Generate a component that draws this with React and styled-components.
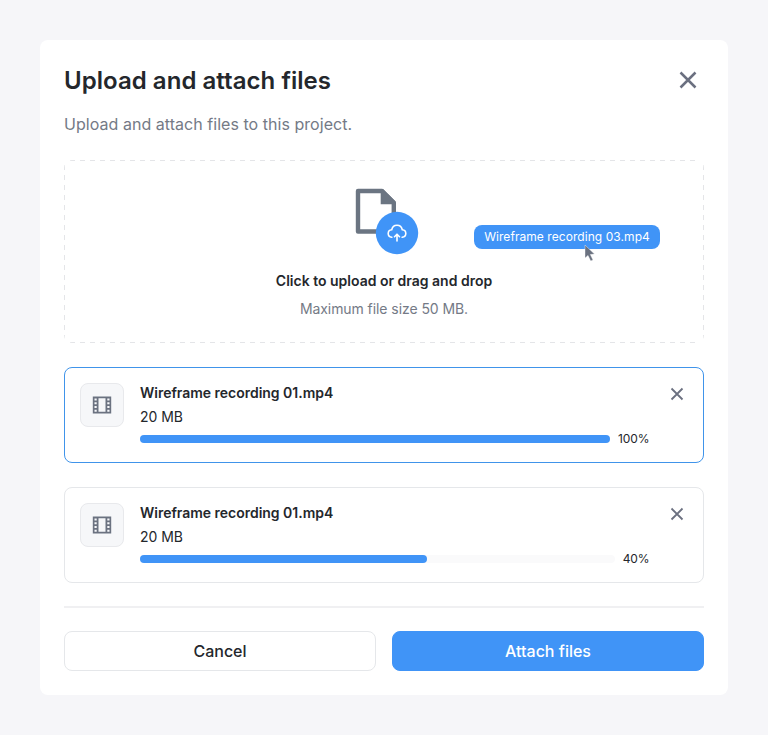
import React from "react";
import styled, { createGlobalStyle } from "styled-components";

const GlobalStyle = createGlobalStyle`
  * { box-sizing: border-box; }
  body {
    margin: 0;
    background: #f6f6f9;
    font-family: Inter, "Liberation Sans", sans-serif;
    color: #24272c;
  }
  h1, p { margin: 0; }
  button { font: inherit; color: inherit; cursor: pointer; }
`;

const Page = styled.main`
  padding: 40px;
  height: 735px;
`;

const Dialog = styled.section`
  display: flex;
  flex-direction: column;
  width: 688px;
  height: 655px;
  padding: 24px;
  border-radius: 8px;
  background: #fff;
`;

const Header = styled.header`
  display: flex;
  justify-content: space-between;
  align-items: center;
  height: 32px;
`;

const Title = styled.h1`
  padding-top: 2px;
  font-size: 24px;
  font-weight: 600;
  line-height: 32px;
  letter-spacing: 0.04px;
`;

const Subtitle = styled.p`
  margin-top: 16px;
  font-size: 16px;
  line-height: 24px;
  letter-spacing: 0.04px;
  color: #747a86;
`;

const IconButton = styled.button`
  display: flex;
  align-items: center;
  justify-content: center;
  flex: none;
  width: ${(p) => p.$size}px;
  height: ${(p) => p.$size}px;
  padding: 0;
  border: 0;
  background: none;
  color: #6b7080;
`;

const DropZone = styled.div`
  position: relative;
  display: flex;
  flex-direction: column;
  align-items: center;
  height: 183px;
  margin-top: 24px;
  padding-top: 28px;
  border-radius: 8px;
  --dash-x: repeating-linear-gradient(90deg, #e4e5e8 0 5px, transparent 5px 10px);
  --dash-y: repeating-linear-gradient(180deg, #e4e5e8 0 5px, transparent 5px 10px);
  background:
    var(--dash-x) 6px 0 / calc(100% - 8px) 1px no-repeat,
    var(--dash-x) 6px 100% / calc(100% - 8px) 1px no-repeat,
    var(--dash-y) 0 5px / 1px calc(100% - 8px) no-repeat,
    var(--dash-y) 100% 5px / 1px calc(100% - 8px) no-repeat;
`;

const UploadArt = styled.svg`
  display: block;
  width: 66px;
  height: 68px;
  margin-left: 8px;
`;

const DropTitle = styled.p`
  margin-top: 15px;
  font-size: 14px;
  font-weight: 600;
  line-height: 20px;
`;

const DropHint = styled.p`
  margin-top: 8px;
  font-size: 14px;
  line-height: 20px;
  letter-spacing: -0.07px;
  color: #747a86;
`;

const DragChip = styled.div`
  position: absolute;
  left: 410px;
  top: 65px;
  width: 186px;
  height: 24px;
  border-radius: 8px;
  background: #4094f7;
  color: #fff;
  font-size: 12px;
  line-height: 24px;
  letter-spacing: 0.06px;
  text-align: center;
  white-space: nowrap;
`;

const Cursor = styled.svg`
  position: absolute;
  left: 110px;
  top: 19px;
  width: 12px;
  height: 19px;
`;

const FileCard = styled.article`
  display: flex;
  height: 96px;
  margin-top: 24px;
  padding: 15px;
  border: 1px solid ${(p) => (p.$active ? "#4094ea" : "#e5e7ea")};
  border-radius: 8px;
`;

const FileBadge = styled.div`
  display: flex;
  align-items: center;
  justify-content: center;
  flex: none;
  width: 44px;
  height: 44px;
  border: 1px solid #e8e9ec;
  border-radius: 8px;
  background: #f6f7f9;
`;

const FileInfo = styled.div`
  width: 509px;
  margin-left: 16px;
`;

const FileName = styled.p`
  font-size: 14px;
  font-weight: 600;
  line-height: 20px;
  letter-spacing: -0.02px;
`;

const FileSize = styled.p`
  margin-top: 4px;
  font-size: 14px;
  line-height: 20px;
  letter-spacing: -0.05px;
`;

const ProgressRow = styled.div`
  display: flex;
  align-items: center;
  gap: 8px;
  height: 16px;
  margin-top: 4px;
`;

const Track = styled.div`
  flex: 1;
  height: 8px;
  border-radius: 4px;
  background: #fafafb;
`;

const Fill = styled.div`
  height: 100%;
  border-radius: 4px;
  background: #4094f7;
`;

const Percent = styled.span`
  margin-right: -0.5px;
  font-size: 12px;
  line-height: 16px;
  letter-spacing: -0.1px;
`;

const CardAction = styled.div`
  margin: 0 0 0 auto;
`;

const Footer = styled.footer`
  display: grid;
  grid-template-columns: 1fr 1fr;
  gap: 16px;
  margin-top: 23px;
  padding-top: 23px;
  border-top: 2px solid #f0f0f2;
`;

const Button = styled.button`
  height: 40px;
  padding: 0;
  border: 1px solid ${(p) => (p.$primary ? "#4094f7" : "#e5e7ea")};
  border-radius: 8px;
  background: ${(p) => (p.$primary ? "#4094f7" : "#fff")};
  color: ${(p) => (p.$primary ? "#fff" : "#24272c")};
  font-size: 16px;
  font-weight: 500;
  line-height: 24px;
`;

function CloseIcon({ size, stroke }) {
  return (
    <svg width={size} height={size} viewBox={`0 0 ${size} ${size}`} fill="none">
      <path
        d={`M1.500 1.500 ${size - 1.5} ${size - 1.5}M${size - 1.5} 1.500 1.500 ${size - 1.5}`}
        stroke="currentColor"
        strokeWidth={stroke}
      />
    </svg>
  );
}

function FilmIcon() {
  return (
    <svg width="20" height="18" viewBox="0 0 20 18">
      <path fill="#6b7280" d="M.8.5h18.400v17H.8z" />
      <path
        fill="#f6f7f9"
        d="M6.500 2.200h7v13.600h-7zM2.500 2.400h2.200v2H2.500zM2.500 6.200h2.200v2H2.500zM2.500 10h2.200v2H2.500zM2.500 13.700h2.200v2H2.500zM15.300 2.400h2.200v2h-2.200zM15.300 6.200h2.200v2h-2.200zM15.300 10h2.200v2h-2.200zM15.300 13.700h2.200v2h-2.200z"
      />
    </svg>
  );
}

function UploadIllustration() {
  return (
    <UploadArt viewBox="0 0 66 68">
      <path
        d="M3 3h24L38.800 14.800v28.700H3z"
        fill="none"
        stroke="#6b7582"
        strokeWidth="4.400"
        strokeLinejoin="round"
      />
      <path fill="#6b7582" d="M25.700 1h2.300l12.600 12.600v2.700H25.700z" />
      <circle cx="42" cy="45" r="21.200" fill="#4094f7" />
      <g fill="none" stroke="#fff" strokeWidth="1.600" strokeLinecap="round" strokeLinejoin="round">
        <path d="M36.800 49.300c-2.100-.3-3.600-1.800-3.600-3.800 0-2 1.500-3.500 3.500-3.700.5-2.700 2.600-4.500 5.300-4.500s4.800 1.800 5.300 4.500c2 .2 3.500 1.700 3.500 3.700s-1.500 3.500-3.600 3.800" />
        <path d="M42 53v-6.500M39.500 48.700l2.500-2.500 2.500 2.500" />
      </g>
    </UploadArt>
  );
}

const files = [
  { id: 1, name: "Wireframe recording 01.mp4", size: "20 MB", percent: 100, bar: 100, active: true },
  { id: 2, name: "Wireframe recording 01.mp4", size: "20 MB", percent: 40, bar: 60.5, active: false },
];

export default function App() {
  return (
    <Page>
      <GlobalStyle />
      <Dialog>
        <Header>
          <Title>Upload and attach files</Title>
          <IconButton $size={32} aria-label="Close">
            <CloseIcon size={18} stroke={2.5} />
          </IconButton>
        </Header>
        <Subtitle>Upload and attach files to this project.</Subtitle>
        <DropZone>
          <UploadIllustration />
          <DropTitle>Click to upload or drag and drop</DropTitle>
          <DropHint>Maximum file size 50 MB.</DropHint>
          <DragChip>
            Wireframe recording 03.mp4
            <Cursor viewBox="0 0 12 19">
              <path fill="#6b7280" stroke="#fff" strokeWidth=".4" d="M1 1v13l3-2.600 2.700 5.600 2.300-1.100-2.700-5.400 4.200-.4z" />
            </Cursor>
          </DragChip>
        </DropZone>
        {files.map((file) => (
          <FileCard key={file.id} $active={file.active}>
            <FileBadge>
              <FilmIcon />
            </FileBadge>
            <FileInfo>
              <FileName>{file.name}</FileName>
              <FileSize>{file.size}</FileSize>
              <ProgressRow>
                <Track>
                  <Fill style={{ width: `${file.bar}%` }} />
                </Track>
                <Percent>{file.percent}%</Percent>
              </ProgressRow>
            </FileInfo>
            <CardAction>
              <IconButton $size={22} aria-label={`Remove ${file.name}`}>
                <CloseIcon size={14} stroke={1.8} />
              </IconButton>
            </CardAction>
          </FileCard>
        ))}
        <Footer>
          <Button>Cancel</Button>
          <Button $primary>Attach files</Button>
        </Footer>
      </Dialog>
    </Page>
  );
}
